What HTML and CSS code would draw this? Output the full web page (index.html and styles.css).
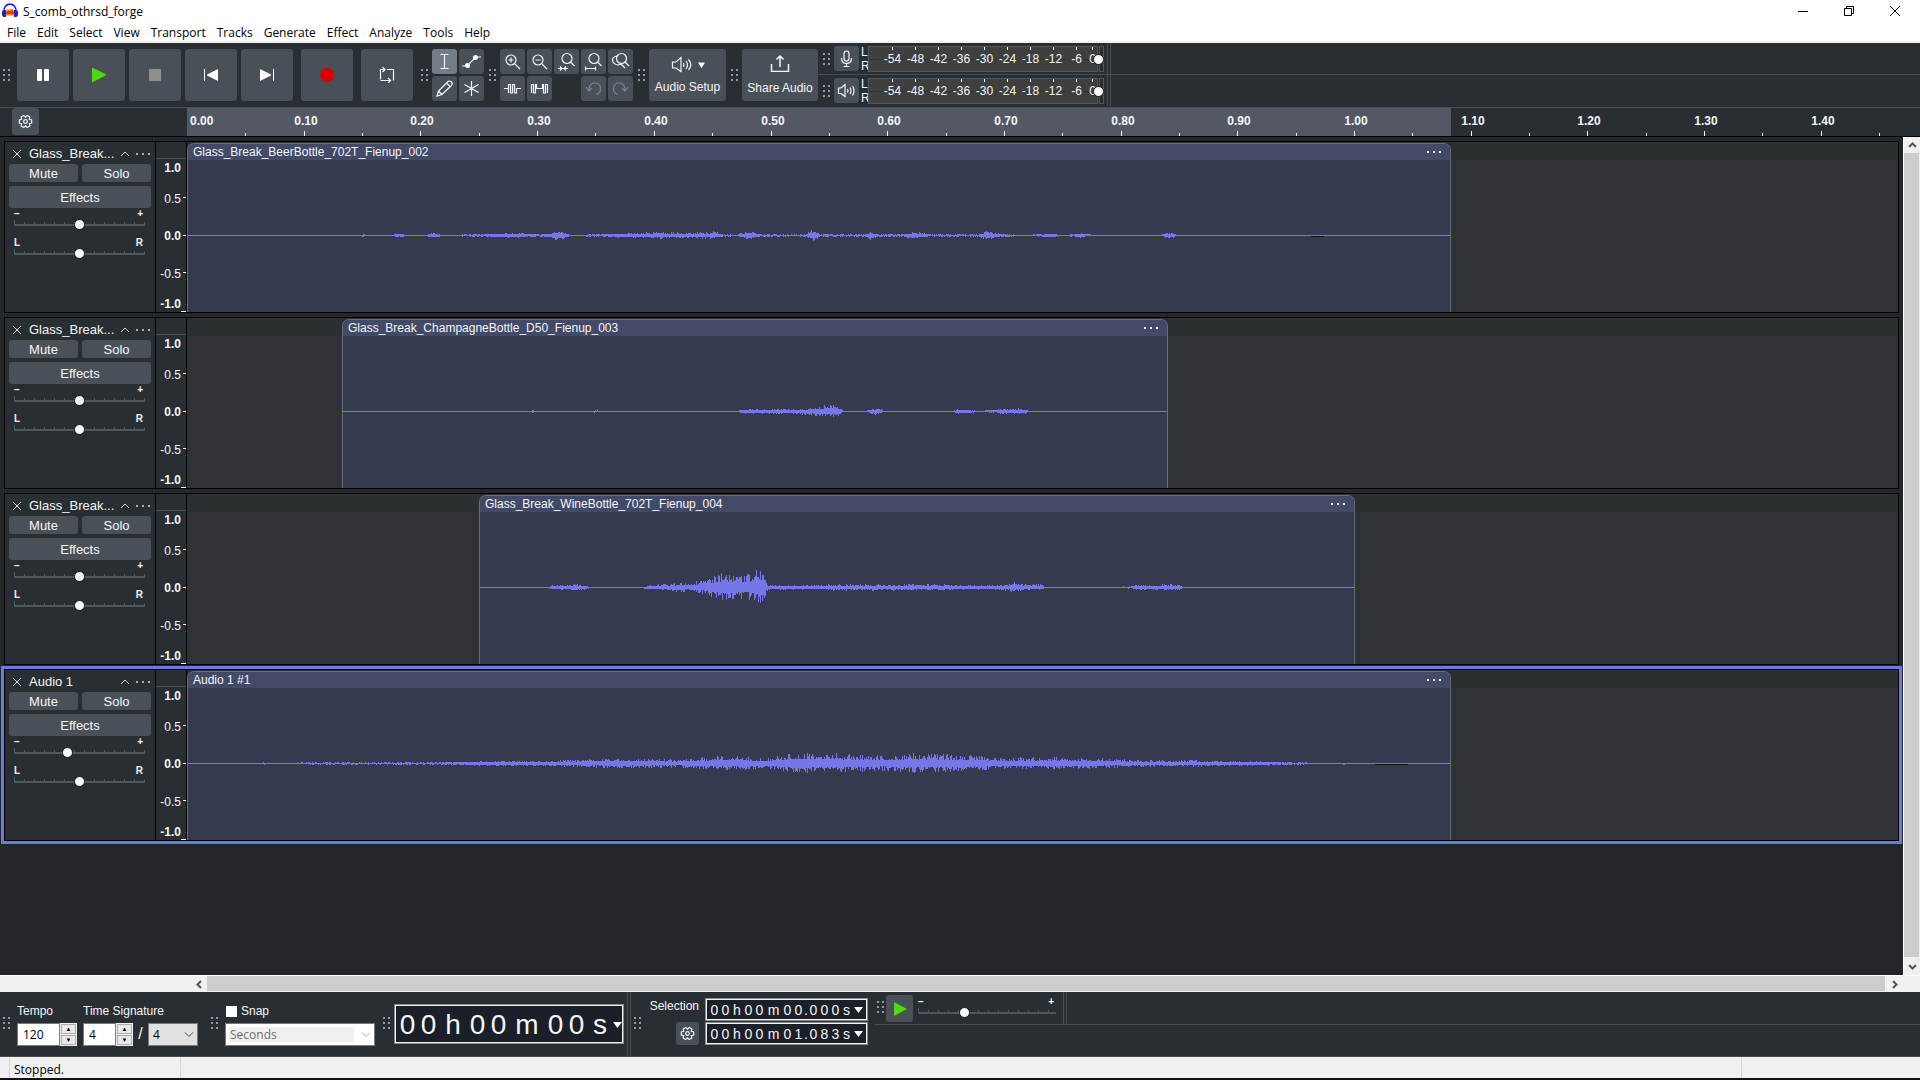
FILE: index.html
```html
<!DOCTYPE html>
<html lang="en">
<head>
<meta charset="UTF-8">
<title>S_comb_othrsd_forge</title>
<meta name="viewport" content="width=device-width, initial-scale=1.0">
<link rel="stylesheet" href="styles.css">
</head>
<body>

<!-- Window title -->
<header class="titlebar">
    <svg class="app-icon" viewBox="0 0 16 16">
        <path d="M4 6h8v7H4z" fill="#ffd21a"/>
        <path d="M4 9l2-2 2 1 2-2 2 3v2l-2 1-2-1-2 1-2-1z" fill="#f03a12"/>
        <path d="M2 9C1 -1.500 15 -1.500 14 9" fill="none" stroke="#1a22d8" stroke-width="1.600"/>
        <path d="M0 9q0-2 2-2h2v7H2q-2 0-2-3zM16 9q0-2-2-2h-2v7h2q2 0 2-3z" fill="#1a22d8"/>
    </svg>
    <h1>S_comb_othrsd_forge</h1>
    <div class="win-buttons">
        <button aria-label="Minimize"><svg viewBox="0 0 10 10"><path d="M0 5.500h10"/></svg></button>
        <button aria-label="Restore"><svg viewBox="0 0 10 10"><path d="M.5 2.500h7v7h-7zM2.500 2.500v-2h7v7h-2"/></svg></button>
        <button aria-label="Close"><svg viewBox="0 0 10 10"><path d="M0 0l10 10M10 0L0 10"/></svg></button>
    </div>
</header>

<nav class="menu">
    <a href="#">File</a><a href="#">Edit</a><a href="#">Select</a><a href="#">View</a><a href="#">Transport</a><a href="#">Tracks</a><a href="#">Generate</a><a href="#">Effect</a><a href="#">Analyze</a><a href="#">Tools</a><a href="#">Help</a>
</nav>

<!-- Top toolbars -->
<div class="toolbar">
    <div class="transport">
        <i class="grip"></i>
        <button class="big" aria-label="Pause"><svg viewBox="0 0 16 16" fill="#fff"><rect x="2" y="2" width="5" height="12" rx="1"/><rect x="9" y="2" width="5" height="12" rx="1"/></svg></button>
        <button class="big" aria-label="Play"><svg viewBox="0 0 16 16" fill="#4fd80f"><path d="M1 1.500q0-1 1-.5l12.500 6q1 .8 0 1.500L2 15q-1 .5-1-.5z"/></svg></button>
        <button class="big" aria-label="Stop"><svg viewBox="0 0 16 16" fill="#8f8f8f"><rect x="2" y="2" width="12" height="12"/></svg></button>
        <button class="big" aria-label="Skip to Start"><svg viewBox="0 0 16 16" fill="#fff"><path d="M1 2h1v12H1zM15 2v12L4 8.500v-1z"/></svg></button>
        <button class="big" aria-label="Skip to End"><svg viewBox="0 0 16 16" fill="#fff"><path d="M14 2h1v12h-1zM1 2v12l11-5.500v-1z"/></svg></button>
        <button class="big apart" aria-label="Record"><svg viewBox="0 0 16 16"><circle cx="8" cy="8" r="7" fill="#d80000"/></svg></button>
        <button class="big apart" aria-label="Loop"><svg class="line" viewBox="0 0 16 16"><path d="M6 2.500H1.500v10M3.500 0L6 2.500 3.500 5M8 2.500h6.500V6M1.500 13.500H11M9 11l2.500 2.500L9 16M14.500 4v9.500"/></svg></button>
    </div>

    <i class="grip"></i>
    <div class="tools two">
        <button class="small on" aria-label="Selection Tool"><svg class="line" viewBox="0 0 17 17"><path d="M4.500 1.500h8M4.500 15.500h8M8.500 1.500v14"/></svg></button>
        <button class="small" aria-label="Envelope Tool"><svg class="line" viewBox="0 0 17 17"><path d="M-1 13h5L13 4h5"/><circle cx="4.500" cy="12.500" r="2" fill="#fff"/><circle cx="12.500" cy="4.500" r="2" fill="#fff"/></svg></button>
        <button class="small" aria-label="Draw Tool"><svg class="line" viewBox="0 0 17 17"><path d="M1 16l1.500-5L12 1.500q2-1 3.500.5t0 3.500L6 14.500zM2.500 11L6 14.500M10.500 3l3.500 3.500"/></svg></button>
        <button class="small" aria-label="Multi-Tool"><svg class="line" viewBox="0 0 17 17"><path d="M8.500 1v15M1.500 4.500l14 8M1.500 12.500l14-8"/></svg></button>
    </div>

    <i class="grip"></i>
    <div class="tools five">
        <button class="small" aria-label="Zoom In"><svg class="line" viewBox="0 0 17 17"><circle cx="7" cy="7" r="5"/><path d="M11 11l5 5M4.500 7h5M7 4.500v5"/></svg></button>
        <button class="small" aria-label="Zoom Out"><svg class="line" viewBox="0 0 17 17"><circle cx="7" cy="7" r="5"/><path d="M11 11l5 5M4.500 7h5"/></svg></button>
        <button class="small" aria-label="Fit Selection"><svg class="line" viewBox="0 0 17 17"><circle cx="9" cy="5.500" r="5"/><path d="M12.500 9l4 4M0 15.500h10M2 13.500l2 2-2 2M8 13.500l-2 2 2 2"/></svg></button>
        <button class="small" aria-label="Fit Project"><svg class="line" viewBox="0 0 17 17"><circle cx="9" cy="5.500" r="5"/><path d="M12.500 9l4 4M.5 15.500h10M.5 13.500v4M10.500 13.500v4"/></svg></button>
        <button class="small" aria-label="Zoom Toggle"><svg class="line" viewBox="0 0 17 17"><circle cx="9.500" cy="5.500" r="5"/><path d="M13 9l4 4M5 3Q0 4 .5 7.500T6 12q3 0 4-2M9 11l4 4"/></svg></button>
        <button class="small" aria-label="Trim Audio"><svg class="line" viewBox="0 0 17 17"><path d="M0 8.500h4.500V13M4.500 13V4.500h2V13h2V4.500h2V13h2V8.500H17"/></svg></button>
        <button class="small" aria-label="Silence Audio"><svg class="line" viewBox="0 0 17 17"><path d="M.5 13V4.500h2V13h2V4.500h1v4h6v-4h1V13h2V4.500h2V13"/></svg></button>
        <span></span>
        <button class="small dim" aria-label="Undo"><svg class="line" viewBox="0 0 17 17"><path d="M1 7l3 4 3-3M4 10Q4 3 10 3q5 0 5.500 5T11 14.500"/></svg></button>
        <button class="small dim" aria-label="Redo"><svg class="line" viewBox="0 0 17 17"><path d="M16 7l-3 4-3-3M13 10q0-7-6-7Q2 3 1.500 8T6 14.500"/></svg></button>
    </div>

    <i class="grip"></i>
    <button class="wide"><svg class="line" viewBox="0 0 34 17"><path d="M1.500 6v6H5l5 3.500v-14L5 6zM12.500 7q1 2 0 4M15 5q3 4 0 8M17.500 3.500q4.500 5.500 0 10.500"/><path d="M28 7h5l-2.500 4z" fill="#fff"/></svg>Audio Setup</button>
    <i class="grip"></i>
    <button class="wide share"><svg class="line" viewBox="0 0 34 17"><path d="M8.500 9v7.500h17V9M17 12V1M13.500 4.500L17 1l3.500 3.500" stroke-width="1.500"/></svg>Share Audio</button>

    <div class="meters">
        <div class="meter-row">
            <i class="grip"></i>
            <button class="small" aria-label="Record Meter"><svg class="line" viewBox="0 0 17 17"><rect x="6" y="1" width="5" height="10" rx="2.500"/><path d="M3.500 8q0 5.500 5 5.500t5-5.500M8.500 13.500V16M5.500 16.500h6"/></svg></button>
            <div class="lr"><span>L</span><span>R</span></div>
            <div class="meter"><div class="scale"><span>-54</span><span>-48</span><span>-42</span><span>-36</span><span>-30</span><span>-24</span><span>-18</span><span>-12</span><span>-6</span><span>0</span></div><i class="clip-light"></i><input type="range" value="100" aria-label="Recording volume"></div>
            <i class="dock-end"></i>
        </div>
        <div class="meter-row">
            <i class="grip"></i>
            <button class="small" aria-label="Playback Meter"><svg class="line" viewBox="0 0 17 17"><path d="M.5 6v5.500h2.500l4 3v-12L3 6zM9.500 7q1 2 0 3.500M12 5.500q2 3 0 6.500M14.500 4q3 4.500 0 9.500"/></svg></button>
            <div class="lr"><span>L</span><span>R</span></div>
            <div class="meter"><div class="scale"><span>-54</span><span>-48</span><span>-42</span><span>-36</span><span>-30</span><span>-24</span><span>-18</span><span>-12</span><span>-6</span><span>0</span></div><i class="clip-light"></i><input type="range" value="100" aria-label="Playback volume"></div>
            <i class="dock-end"></i>
        </div>
    </div>
</div>

<!-- Timeline -->
<div class="timeline">
    <div class="timeline-left"><button class="gear" aria-label="Timeline Options"><svg class="line" viewBox="0 0 16 16"><path d="M14.600 6.400v3.200L12 10.300l.7 2.600-2.800 1.600L8 12.600l-1.900 1.900-2.800-1.600.7-2.600-2.600-.7V6.400L4 5.700l-.7-2.600 2.800-1.600L8 3.400l1.900-1.900 2.800 1.600-.7 2.600z"/><circle cx="8" cy="8" r="2"/></svg></button></div>
    <div class="ruler" id="ruler"></div>
</div>

<main class="workspace">
    <div class="tracks" id="tracks"></div>
    <div class="vscroll">
        <button aria-label="Scroll up"><svg viewBox="0 0 9 9"><path d="M1 6l3.500-3.500L8 6"/></svg></button>
        <div class="thumb"></div>
        <button aria-label="Scroll down"><svg viewBox="0 0 9 9"><path d="M1 3l3.500 3.500L8 3"/></svg></button>
    </div>
</main>
<div class="hscroll">
    <button aria-label="Scroll left"><svg viewBox="0 0 9 9"><path d="M6 1L2.500 4.500 6 8"/></svg></button>
    <div class="thumb"></div>
    <button aria-label="Scroll right"><svg viewBox="0 0 9 9"><path d="M3 1l3.500 3.500L3 8"/></svg></button>
</div>

<!-- Bottom toolbars -->
<div class="bottombar">
    <i class="grip"></i>
    <div class="field">
        <label for="tempo">Tempo</label>
        <div class="controls"><input id="tempo" class="tempo" type="text" value="120"><span class="spin"><button aria-label="Tempo up">▲</button><button aria-label="Tempo down">▼</button></span></div>
    </div>
    <div class="field">
        <label for="beats">Time Signature</label>
        <div class="controls"><input id="beats" class="beats" type="text" value="4"><span class="spin"><button aria-label="Beats up">▲</button><button aria-label="Beats down">▼</button></span><span class="slash">/</span><span class="pick"><select class="note" aria-label="Note value"><option>4</option></select><svg viewBox="0 0 10 6"><path d="M1 .5l4 4 4-4"/></svg></span></div>
    </div>
    <i class="grip snap-grip"></i>
    <div class="field snap">
        <label><input type="checkbox">Snap</label>
        <div class="controls"><span class="pick"><select class="snap-to" aria-label="Snap to" disabled><option>Seconds</option></select><svg viewBox="0 0 10 6"><path d="M1 .5l4 4 4-4"/></svg></span></div>
    </div>
    <i class="grip time-grip"></i>
    <div class="time large" data-time="00h00m00s" aria-label="Audio position"></div>
    <i class="dock-end"></i>
    <i class="grip selection-grip"></i>
    <div class="selection-label"><span>Selection</span><button class="gear" aria-label="Selection Options"><svg class="line" viewBox="0 0 16 16"><path d="M14.600 6.400v3.200L12 10.300l.7 2.600-2.800 1.600L8 12.600l-1.900 1.900-2.800-1.600.7-2.600-2.600-.7V6.400L4 5.700l-.7-2.600 2.800-1.600L8 3.400l1.900-1.900 2.800 1.600-.7 2.600z"/><circle cx="8" cy="8" r="2"/></svg></button></div>
    <div class="selection-times">
        <div class="time" data-time="00h00m00.000s" aria-label="Selection start"></div>
        <div class="time" data-time="00h00m01.083s" aria-label="Selection end"></div>
    </div>
    <div class="speed">
        <i class="grip"></i>
        <button class="play" aria-label="Play at speed"><svg viewBox="0 0 16 16" fill="#4fd80f"><path d="M2 1l13 7-13 7z"/></svg></button>
        <div class="slider"><div class="ends"><span>−</span><span>+</span></div><input type="range" value="32" aria-label="Playback speed"></div>
        <i class="dock-end"></i>
    </div>
</div>

<footer class="status"><span class="state">Stopped.</span><span class="message"></span><span class="rate"></span></footer>
<div class="taskbar"></div>

<script>
/* ===== PROJECT ===== */
const ZOOM = 1167;          // pixels per second
const SELECTION = 1.083;    // seconds

// env: [pixel from clip start, peak height]
const tracks = [
    { name:"Glass_Break...", clip:"Glass_Break_BeerBottle_702T_Fienup_002", start:0, end:1.083, gain:50,
      env:[[170,0],[175,1],[182,0],[203,0],[208,2],[216,1],[219,0],[236,0],[245,3],[254,0],[280,1],[330,2],[350,1],[362,2],[366,5],[370,5],[378,2],[386,0],[400,1],[440,2],[460,3],[486,3],[500,2],[526,4],[535,1],[550,1],[562,5],[572,1],[590,1],[618,1],[622,6],[627,6],[632,1],[650,1],[676,1],[682,5],[690,1],[710,1],[718,2],[729,4],[740,1],[765,1],[790,1],[798,5],[806,2],[820,1],[835,0],[850,1],[864,2],[872,0],[885,1],[892,2],[903,1],[905,0],[972,0],[980,4],[990,0]], dark:[1123,1136] },
    { name:"Glass_Break...", clip:"Glass_Break_ChampagneBottle_D50_Fienup_003", start:0.133, end:0.841, gain:50,
      env:[[186,0],[189,1],[192,0],[248,0],[252,1],[258,0],[390,0],[400,2],[430,2],[460,3],[472,5],[485,6],[495,7],[498,2],[500,0],[522,0],[532,4],[540,1],[544,0],[605,0],[615,2],[630,1],[635,0],[645,1],[672,3],[682,2],[686,0]] },
    { name:"Glass_Break...", clip:"Glass_Break_WineBottle_702T_Fienup_004", start:0.25, end:1.001, gain:50,
      env:[[6,1],[8,0],[64,0],[72,2],[98,3],[108,1],[112,0],[160,0],[170,2],[192,4],[212,5],[225,8],[237,13],[245,16],[253,15],[261,13],[269,13],[275,19],[281,19],[284,12],[287,4],[293,2],[330,2],[355,3],[400,3],[460,3],[475,2],[515,2],[525,3],[532,5],[545,3],[562,3],[564,0],[638,0],[655,2],[680,3],[698,3],[702,0]] },
    { name:"Audio 1", clip:"Audio 1 #1", start:0, end:1.083, gain:40, focused:true,
      env:[[70,0],[76,1],[80,0],[130,1],[250,1],[293,2],[375,3],[430,5],[490,4],[526,7],[550,8],[575,5],[604,10],[648,10],[695,8],[728,10],[768,9],[817,6],[865,6],[912,5],[960,3],[1016,3],[1065,2],[1113,1],[1125,0],[1152,0],[1155,1],[1160,0]], dark:[1187,1220] }
];

/* ===== RULER ===== */
const ruler = document.getElementById('ruler');
ruler.style.setProperty('--selected', Math.round(SELECTION * ZOOM) + 'px');
for (let i = 0; i < 30; i++) {
    const x = Math.round(i * ZOOM / 20), next = Math.round((i + 1) * ZOOM / 20);
    const major = i % 2 === 0;
    ruler.insertAdjacentHTML('beforeend',
        `<div class="step ${major ? 'major' : ''}" style="width:${next - x}px">${major ? `<span>${(i / 20).toFixed(2)}</span>` : ''}</div>`);
}

/* ===== WAVEFORM ===== */
function wavePath(env, width, seed) {
    const rnd = () => (seed = (seed * 16807) % 2147483647) / 2147483647;
    let d = `M0 75h${width}v1H0z`;
    for (let k = 0; k < env.length - 1; k++) {
        const [x0, a0] = env[k], [x1, a1] = env[k + 1];
        for (let x = x0; x < x1; x++) {
            const peak = a0 + (a1 - a0) * (x - x0) / (x1 - x0);
            const r = rnd(), s = rnd();
            const up = Math.round(peak * (.35 + r * r * .65));
            const down = Math.round(peak * (.3 + s * s * .6));
            if (up + down) d += `M${x} ${75 - up}h1v${up + down + 1}h-1z`;
        }
    }
    return d;
}

/* ===== TRACKS ===== */
const list = document.getElementById('tracks');
tracks.forEach((t, i) => {
    const left = Math.round(t.start * ZOOM), width = Math.round((t.end - t.start) * ZOOM);
    list.insertAdjacentHTML('beforeend', `
    <section class="track ${t.focused ? 'focused' : ''}">
        <div class="panel">
            <div class="panel-title">
                <button class="icon" aria-label="Close track"><svg viewBox="0 0 10 10"><path d="M1 1l8 8M9 1L1 9"/></svg></button>
                <h2>${t.name}</h2>
                <button class="icon" aria-label="Collapse"><svg viewBox="0 0 10 10"><path d="M1 7l4-4 4 4"/></svg></button>
                <button class="icon more" aria-label="Track menu"><i></i><i></i><i></i></button>
            </div>
            <div class="mute-solo"><button>Mute</button><button>Solo</button></div>
            <button class="effects">Effects</button>
            <div class="slider"><div class="ends"><span>−</span><span>+</span></div><input type="range" value="${t.gain}" aria-label="Gain"></div>
            <div class="slider pan"><div class="ends"><span>L</span><span>R</span></div><input type="range" value="50" aria-label="Pan"></div>
        </div>
        <div class="vruler"><b>1.0</b><span>0.5</span><b>0.0</b><span>-0.5</span><b>-1.0</b></div>
        <div class="lane">
            <article class="clip" style="margin-left:${left}px;width:${width}px">
                <div class="clip-head"><span>${t.clip}</span><button class="more" aria-label="Clip menu"><i></i><i></i><i></i></button></div>
                <svg class="wave" width="${width}" height="151"><path d="${wavePath(t.env, width, 77 + i)}"/>${t.dark ? `<path class="dark" d="M${t.dark[0]} 76H${t.dark[1]}v1H${t.dark[0]}z"/>` : ''}</svg>
            </article>
        </div>
    </section>`);
});

/* ===== TIME DISPLAYS ===== */
document.querySelectorAll('.time').forEach(el => {
    el.innerHTML = [...el.dataset.time].map(c =>
        /\d/.test(c) ? `<span>${c}</span>` : c === '.' ? '<span class="point">.</span>' : `<span class="unit">${c}</span>`
    ).join('') + '<button aria-label="Time format"></button>';
});
</script>

</body>
</html>
```
FILE: styles.css
```css
/* ===== GLOBAL ===== */
*{box-sizing:border-box;margin:0;padding:0;}
body{
    display:flex;
    flex-direction:column;
    min-height:100vh;
    overflow:hidden;
    background:#23262b;
    color:#f4f6f8;
    font:12px/16px "Liberation Sans",Arial,sans-serif;
}
button{border:none;background:none;color:inherit;font:inherit;}
svg{display:block;flex:none;}
.line{fill:none;stroke:#f4f6f8;stroke-width:1.2;}
input,select{font-family:"Open Sans",sans-serif;font-size:12px;border-radius:0;}

/* ===== TITLE + MENU ===== */
.titlebar{
    display:flex;
    align-items:center;
    height:22px;
    padding-left:2px;
    background:#fff;
    color:#000;
}
.app-icon{width:16px;height:16px;}
h1{
    flex:1;
    margin-left:5px;
    padding-top:2px;
    font:12px/16px "Open Sans",sans-serif;
}
.win-buttons{display:flex;margin-right:2px;}
.win-buttons button{width:46px;height:20px;display:flex;align-items:center;justify-content:center;}
.win-buttons svg{width:10px;height:10px;fill:none;stroke:#000;}
.menu{
    display:flex;
    gap:11px;
    height:21px;
    padding-left:7px;
    background:#fff;
    border-bottom:2px solid #f0f0f0;
    font:12px/22px "Open Sans",sans-serif;
}
.menu a{color:#000;text-decoration:none;}

/* ===== TOP TOOLBARS ===== */
.toolbar{
    display:flex;
    align-items:center;
    height:65px;
    background:#292e32;
    border-bottom:1px solid #484d52;
}
.grip{
    flex:none;
    width:7px;
    height:12px;
    margin:0 4px 0 5px;
    background:conic-gradient(from 270deg at 2px 2px,#9297a8 90deg,transparent 0) 0 0/5px 5px;
}
.transport{display:flex;align-items:center;gap:4px;margin-right:3px;}
.transport .grip{margin:0 3px;}
.big,.small,.wide,.gear,.play{
    display:flex;
    align-items:center;
    justify-content:center;
    flex:none;
    background:#4a5058;
    border-radius:3px;
}
.big{width:52px;height:52px;}
.big svg{width:16px;height:16px;}
.apart{margin-left:4px;}
.small{width:25px;height:25px;}
.small svg{width:17px;height:17px;overflow:visible;}
.small.on{background:#727d87;}
.small.dim .line{stroke:#7d8289;}
.tools{display:grid;gap:2px;}
.two{grid-template-columns:repeat(2,25px);}
.five{grid-template-columns:repeat(5,25px);}
.wide{flex-direction:column;gap:6px;width:77px;height:52px;}
.wide svg{width:34px;height:17px;}
.share{width:76px;gap:8px;}

/* meters */
.meters{flex:1;align-self:stretch;}
.meter-row{display:flex;align-items:center;height:31px;}
.meter-row:first-child{height:32px;border-bottom:1px solid #484d52;}
.lr{width:9px;padding-left:2px;line-height:14px;}
.lr span{display:block;}
.meter{position:relative;display:flex;gap:1px;height:26px;}
.scale{
    display:grid;
    grid-template-columns:repeat(9,23px) 1fr;
    width:230px;
    padding-left:12px;
    border:1px solid #53585d;
    background:linear-gradient(#30363b,#30363b) 0 12px/100% 1px no-repeat #3f3f3f;
    text-align:center;
    line-height:24px;
}
.scale span{background:linear-gradient(#fff,#fff) 50% 0/1px 3px no-repeat;}
.clip-light{width:5px;border:1px solid #53585d;}
.dock-end{flex:none;width:4px;align-self:stretch;border:1px solid #484d52;border-width:0 1px;}
.meter-row .dock-end{margin-left:3px;}

/* ===== SLIDERS ===== */
input[type="range"]{
    appearance:none;
    display:block;
    width:100%;
    height:11px;
    background:
        linear-gradient(#51575d,#51575d) 0 5px/100% 2px no-repeat,
        linear-gradient(#51575d,#51575d) 0 1px/1px 4px no-repeat,
        repeating-linear-gradient(90deg,#51575d 0 1px,transparent 1px 10px) 0 3px/100% 2px no-repeat;
}
input[type="range"]::-webkit-slider-thumb{
    appearance:none;
    width:11px;
    height:11px;
    border:1px solid #15181b;
    border-radius:50%;
    background:#fafafa;
}
.meter input[type="range"]{position:absolute;inset:8px 0 auto 0;background:none;}
.ends{display:flex;justify-content:space-between;padding-right:2px;font-size:10px;font-weight:bold;line-height:10px;}

/* ===== TIMELINE ===== */
.timeline{display:flex;height:29px;background:#292e32;border-bottom:1px solid #000;}
.timeline-left{flex:none;width:187px;padding-left:12px;}
.gear{width:27px;height:27px;}
.gear svg{width:15px;height:15px;}
.ruler{
    flex:1;
    display:flex;
    align-items:flex-end;
    overflow:hidden;
    background:linear-gradient(#545864,#545864) 0 0/var(--selected) 100% no-repeat;
}
.step{flex:none;height:28px;background:linear-gradient(#fff,#fff) 0 100%/1px 3px no-repeat;}
.step.major{background-size:1px 5px;}
.step:first-child{background:none;}
.step span{display:block;width:40px;margin-left:-18px;line-height:26px;font-weight:bold;text-align:center;}
.step:first-child span{margin-left:3px;text-align:left;}

/* ===== TRACKS ===== */
.workspace{flex:1;display:flex;min-height:0;}
.tracks{flex:1;display:flex;flex-direction:column;gap:4px;min-width:0;padding:4px;}
.track{display:flex;height:172px;border:1px solid #000;background:#292e32;}
.focused{box-shadow:0 0 0 3px #667ae8;}
.panel{flex:none;width:150px;padding:0 4px;font-size:13px;}
.panel-title{display:flex;align-items:center;height:22px;padding:2px 0 0 3px;}
.panel-title h2{flex:1;margin-left:7px;font-size:13px;font-weight:normal;}
.icon svg{width:10px;height:10px;fill:none;stroke:#d4d8dc;}
.more{display:flex;gap:4px;}
.more i{width:2px;height:2px;background:#f4f6f8;}
.icon.more{margin:0 1px 0 6px;}
.icon.more i{background:#a9adb2;}
.mute-solo{display:flex;gap:4px;margin-bottom:4px;}
.mute-solo button,.effects{padding-top:1px;background:#4a5058;border-radius:3px;}
.mute-solo button{flex:1;height:18px;line-height:18px;}
.effects{display:block;width:100%;height:22px;}
.panel .slider{margin:1px 6px 0 5px;}
.panel .pan{margin-top:8px;}
.vruler{
    flex:none;
    display:grid;
    grid-template-rows:17px 20px 37px 38px 37px 1fr;
    width:32px;
    border:solid #000;
    border-width:0 1px;
    text-align:right;
}
.vruler::before{content:"";border-bottom:1px solid #484d52;}
.vruler b,.vruler span{display:flex;align-items:center;justify-content:flex-end;padding:2px 5px 0 0;}
.vruler b:first-of-type{align-items:flex-start;padding-top:1px;}
.vruler b:last-of-type{align-items:flex-end;background:linear-gradient(#fff,#fff) 100% 100%/5px 1px no-repeat;}
.vruler span,.vruler b:nth-child(3){background:linear-gradient(#fff,#fff) 100% 50%/3px 1px no-repeat;}
.lane{flex:1;min-width:0;overflow:hidden;background:linear-gradient(#2a2f31 18px,#2f3236 18px);}
.clip{
    height:169px;
    margin-top:1px;
    border:1px solid #676d7c;
    border-bottom:none;
    border-radius:7px 7px 0 0;
    background:#353a4e;
    overflow:hidden;
}
.clip-head{
    display:flex;
    align-items:center;
    justify-content:space-between;
    height:16px;
    padding:0 9px 0 5px;
    background:#424a68;
}
.wave{fill:#7676e8;shape-rendering:crispEdges;}
.dark{fill:#0b0c12;}

/* ===== SCROLLBARS ===== */
.vscroll,.hscroll{display:flex;background:#f0f0f0;}
.vscroll{flex-direction:column;width:17px;border-left:1px solid #fff;}
.hscroll{height:17px;padding-left:191px;padding-right:17px;border-top:1px solid #fff;}
.vscroll button{height:16px;display:flex;align-items:center;justify-content:center;}
.vscroll button:last-child{height:18px;}
.hscroll button{width:16px;display:flex;align-items:center;justify-content:center;}
.hscroll button:last-child{width:18px;}
.vscroll svg,.hscroll svg{width:9px;height:9px;fill:none;stroke:#555;stroke-width:2;}
.thumb{flex:1;background:#cdcdcd;}
.hscroll .thumb{margin-bottom:1px;}
.vscroll .thumb{margin-right:1px;}

/* ===== BOTTOM TOOLBARS ===== */
.bottombar{
    display:flex;
    height:65px;
    background:#292e32;
    border-bottom:1px solid #484d52;
}
.bottombar > .grip{margin:25px 7px 0 3px;}
.field{margin-right:6px;padding-top:11px;}
.field label{display:flex;align-items:center;height:16px;}
.controls{display:flex;margin-top:4px;}
.controls input,.controls select{height:23px;border:1px solid #7a7a7a;background:#fff;color:#000;}
.controls .tempo{width:43px;padding-left:5px;}
.controls .beats{width:33px;padding-left:5px;}
.spin{display:flex;flex-direction:column;width:17px;height:23px;padding:1px;gap:1px;background:#f0f0f0;}
.spin button{flex:1;border:1px solid #adadad;background:#e9e9e9;color:#000;font-size:6px;line-height:8px;}
.slash{width:15px;font-size:16px;line-height:22px;text-align:center;}
.pick{position:relative;}
.pick select{appearance:none;padding-left:4px;}
.pick svg{position:absolute;top:9px;right:4px;width:10px;height:6px;fill:none;stroke:#444;}
.controls .note{width:50px;background:#e1e1e1;}
.controls .snap-to{width:150px;color:#6d6d6d;opacity:1;background:linear-gradient(#f0f0f0,#f0f0f0) 3px 3px/125px 15px no-repeat #fff;}
.snap .pick svg{stroke:#aaa;}
.snap{margin-right:0;}
.snap input{appearance:none;width:11px;height:11px;margin:0 4px 0 1px;background:#fff;}
.bottombar > .snap-grip{margin-left:7px;}
.bottombar > .time-grip{margin:25px 4px 0 8px;}
.bottombar > .selection-grip{margin:25px 7px 0 3px;}

.time{
    display:flex;
    align-items:center;
    width:163px;
    height:23px;
    padding:1px 0 0 2px;
    border:2px solid #f2f2f2;
    outline:1px solid #8a8d90;
    outline-offset:-1px;
    background:#1b1f27;
    font-size:14px;
}
.time span{flex:none;width:11px;text-align:center;}
.time .point{width:4px;}
.time .unit:nth-child(3){width:12px;}
.time .unit:nth-child(6){width:17px;}
.time button{
    flex:none;
    width:9px;
    height:6px;
    margin:0 3px 0 auto;
    background:#fff;
    clip-path:polygon(0 0,100% 0,50% 100%);
}
.time.large{width:230px;height:40px;margin:12px 3px 0 0;padding:2px 0 0 1px;font-size:28px;}
.large span{width:21px;}
.large .unit:nth-child(3){width:28px;}
.large .unit:nth-child(6){width:36px;}
.large .unit:nth-child(9){width:26px;}
.large button{margin-right:0;}
.selection-label{display:flex;flex-direction:column;align-items:flex-end;gap:8px;width:51px;padding-top:6px;margin-right:6px;}
.selection-label .gear{width:23px;height:23px;}
.selection-times{display:flex;flex-direction:column;gap:1px;padding-top:6px;margin-right:7px;}
.speed{flex:1;display:flex;height:33px;border-bottom:1px solid #484d52;}
.speed .grip{margin:9px 2px 0;}
.play{width:27px;height:27px;margin-top:3px;}
.play svg{width:16px;height:16px;}
.speed .slider{width:138px;margin:5px 7px 0 5px;}

/* ===== STATUS ===== */
.status{
    display:flex;
    height:21px;
    padding-left:9px;
    background:#f0f0f0;
    color:#000;
    font:12px/26px "Open Sans",sans-serif;
}
.status span{height:21px;border-left:1px solid #d7d7d7;}
.state{width:171px;padding-left:4px;}
.message{flex:1;}
.rate{width:179px;}
.taskbar{height:2px;background:#101112;}
```
